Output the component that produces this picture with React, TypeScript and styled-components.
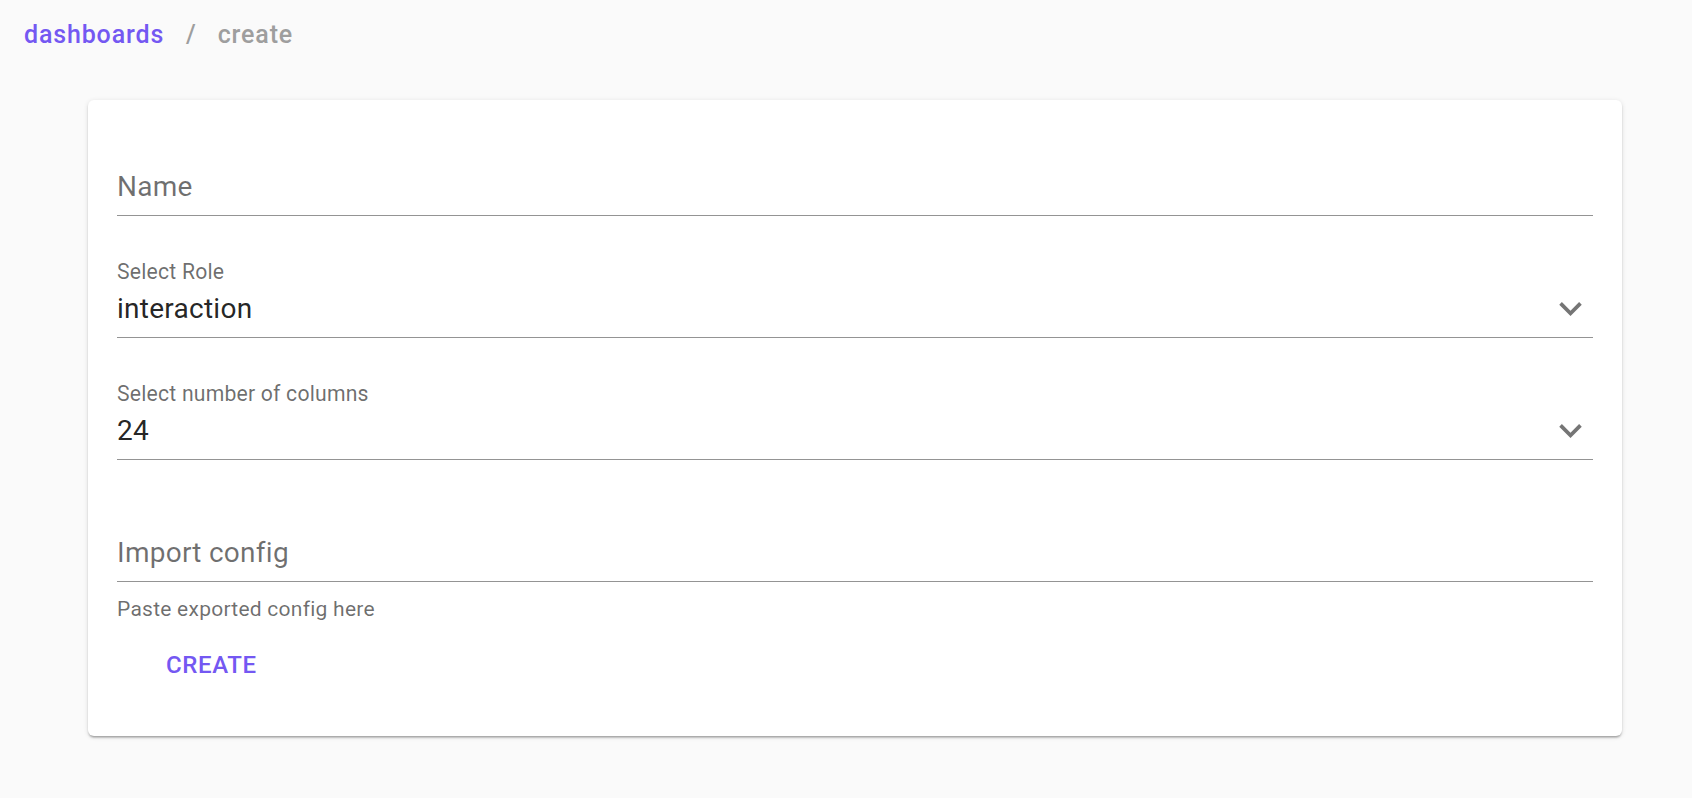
import React from "react";
import styled, { createGlobalStyle } from "styled-components";

const GlobalStyle = createGlobalStyle`
  html, body {
    margin: 0;
    padding: 0;
    background: #fafafa;
  }
  body {
    font-family: Roboto, "Noto Sans", Arial, sans-serif;
    -webkit-font-smoothing: antialiased;
  }
  * { box-sizing: border-box; }
`;

const PURPLE = "#7458f2";

const Page = styled.div`
  min-height: 798px;
  background: #fafafa;
  padding-bottom: 40px;
`;

const Breadcrumbs = styled.nav`
  display: flex;
  align-items: baseline;
  padding: 21px 0 0 24px;
  height: 49px;
  font-size: 25px;
  line-height: 28px;
  font-weight: 500;
  letter-spacing: 0.85px;
`;

const Crumb = styled.a<{ $active?: boolean }>`
  color: ${(p) => (p.$active ? "#9e9e9e" : PURPLE)};
  text-decoration: none;
  cursor: ${(p) => (p.$active ? "default" : "pointer")};
`;

const Separator = styled.span`
  color: #9e9e9e;
  margin: 0 21px 0 22px;
  font-weight: 500;
`;

const Card = styled.section`
  margin: 51px 70px 0 88px;
  background: #fff;
  border-radius: 6px;
  box-shadow: 0 3px 2px -2px rgba(0, 0, 0, 0.2), 0 2px 2px 0 rgba(0, 0, 0, 0.14),
    0 1px 5px 0 rgba(0, 0, 0, 0.12);
  padding: 0 29px 39px;
`;

const Form = styled.form`
  display: flex;
  flex-direction: column;
  gap: 6px;
`;

const Field = styled.div`
  height: 116px;
  display: flex;
  flex-direction: column;
  justify-content: flex-end;
`;

const Label = styled.label`
  font-size: 21.2px;
  line-height: 24px;
  color: rgba(0, 0, 0, 0.58);
  letter-spacing: 0.2px;
  margin-bottom: 4px;
`;

const InputRow = styled.div`
  display: flex;
  align-items: center;
  height: 50px;
  padding: 1px 0 9px;
  border-bottom: 1px solid rgba(0, 0, 0, 0.42);
`;

const Value = styled.div<{ $placeholder?: boolean }>`
  flex: 1;
  font-size: 28px;
  line-height: 39px;
  letter-spacing: 0.26px;
  color: ${(p) => (p.$placeholder ? "rgba(0, 0, 0, 0.56)" : "rgba(0, 0, 0, 0.87)")};
  white-space: nowrap;
`;

const Chevron = styled.svg`
  width: 45px;
  height: 45px;
  margin: -3px 0;
  flex-shrink: 0;
  fill: rgba(0, 0, 0, 0.54);
`;

const Helper = styled.p`
  margin: 9px 0 0;
  font-size: 21px;
  line-height: 24px;
  letter-spacing: 0.25px;
  color: rgba(0, 0, 0, 0.58);
`;

const TextButton = styled.button`
  align-self: flex-start;
  margin: 8px 0 0 35px;
  padding: 10px 14px;
  background: none;
  border: 0;
  border-radius: 6px;
  font-family: inherit;
  font-size: 24px;
  line-height: 41.6px;
  font-weight: 500;
  letter-spacing: 0.6px;
  text-transform: uppercase;
  color: ${PURPLE};
  cursor: pointer;
`;

const ExpandIcon = () => (
  <Chevron viewBox="0 0 24 24" aria-hidden="true">
    <path d="M7.41 8.59 12 13.17l4.59-4.58L18 10l-6 6-6-6 1.41-1.41z" />
  </Chevron>
);

export default function App() {
  return (
    <Page>
      <GlobalStyle />
      <Breadcrumbs>
        <Crumb>dashboards</Crumb>
        <Separator>/</Separator>
        <Crumb $active>create</Crumb>
      </Breadcrumbs>
      <Card>
        <Form onSubmit={(e) => e.preventDefault()}>
          <Field>
            <InputRow>
              <Value $placeholder>Name</Value>
            </InputRow>
          </Field>
          <Field>
            <Label>Select Role</Label>
            <InputRow>
              <Value>interaction</Value>
              <ExpandIcon />
            </InputRow>
          </Field>
          <Field>
            <Label>Select number of columns</Label>
            <InputRow>
              <Value>24</Value>
              <ExpandIcon />
            </InputRow>
          </Field>
          <Field>
            <InputRow>
              <Value $placeholder>Import config</Value>
            </InputRow>
          </Field>
          <Helper>Paste exported config here</Helper>
          <TextButton type="submit">Create</TextButton>
        </Form>
      </Card>
    </Page>
  );
}
